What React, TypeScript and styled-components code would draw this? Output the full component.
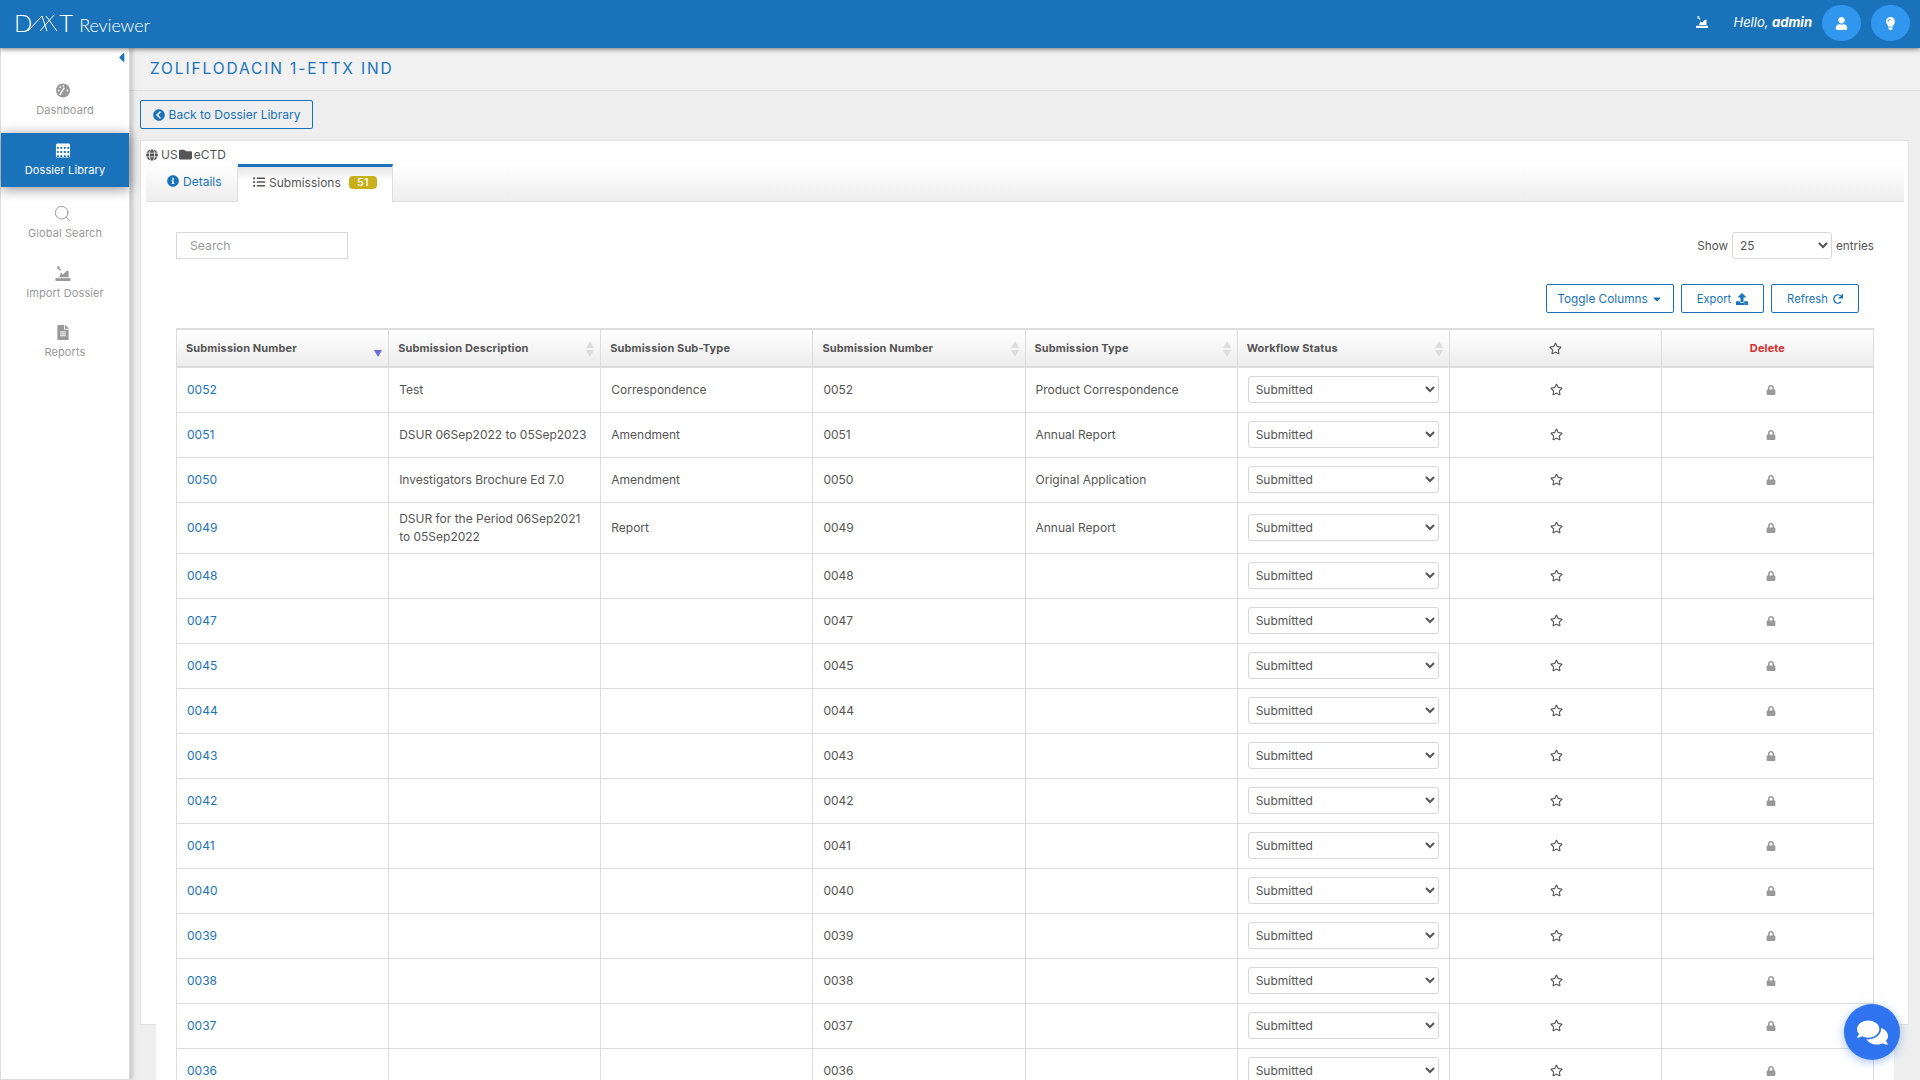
import { createGlobalStyle, styled } from "styled-components";
import {
  FaCaretDown,
  FaCaretLeft,
  FaChevronCircleLeft,
  FaComments,
  FaFileAlt,
  FaFolder,
  FaGlobe,
  FaInfoCircle,
  FaLightbulb,
  FaListUl,
  FaLock,
  FaRedo,
  FaRegStar,
  FaUpload,
  FaUser,
} from "react-icons/fa";
import { Search } from "lucide-react";

const blue = "#1a73ba";
const line = "#dcdcdc";

const GlobalStyle = createGlobalStyle`
  html, body {
    margin: 0;
    height: 100%;
    overflow: hidden;
    background: #eeeeee;
    font-family: Inter, "Liberation Sans", sans-serif;
    color: #555;
  }
  * { box-sizing: border-box; }
`;

const Shell = styled.div`
  height: 100vh;
  display: flex;
  flex-direction: column;
  overflow: hidden;
`;

const TopBar = styled.header`
  height: 48px;
  flex: none;
  background: ${blue};
  box-shadow: 0 1px 5px rgba(0, 0, 0, 0.55);
  display: flex;
  align-items: center;
  padding: 0 10px 2px 14px;
  color: #fff;
  position: relative;
  z-index: 3;
`;

const Logo = styled.div`
  display: flex;
  align-items: baseline;
  flex: 1;
  font-family: Lato, Inter, sans-serif;
  font-weight: 300;
`;

const LogoLetter = styled.span`
  font-size: 24px;
  line-height: 24px;
`;

const LogoMark = styled.svg`
  width: 33px;
  height: 18px;
  margin: 0 -1px 0 -5px;
  align-self: center;
`;

const LogoWord = styled.span`
  font-size: 18px;
  margin-left: 6px;
  letter-spacing: -0.1px;
`;

const TopIcon = styled.span`
  display: flex;
  margin-bottom: 3px;
`;

const Hello = styled.span`
  font-size: 13px;
  font-style: italic;
  margin: 0 0 2px 25px;
  b {
    font-weight: 700;
  }
`;

const RoundButton = styled.span`
  width: 39px;
  height: 36px;
  border-radius: 50%;
  background: #3196ee;
  display: flex;
  align-items: center;
  justify-content: center;
  margin-left: 10px;
  svg {
    width: 13px;
    height: 13px;
  }
`;

const Body = styled.div`
  flex: 1;
  display: flex;
  min-height: 0;
`;

const Sidebar = styled.nav`
  width: 130px;
  flex: none;
  background: #fff;
  border-left: 1px solid ${line};
  border-right: 1px solid ${line};
  border-bottom: 1px solid ${line};
  box-shadow: 3px 0 4px rgba(0, 0, 0, 0.16);
  position: relative;
  z-index: 2;
  padding-top: 26px;
  height: 1032px;
`;

const Collapse = styled.span`
  position: absolute;
  top: 2px;
  right: 0;
  color: ${blue};
  font-size: 15px;
`;

const NavItem = styled.div<{ $active?: boolean; $height: number; $top?: number; $bottom?: number }>`
  height: ${(p) => p.$height}px;
  padding: ${(p) => p.$top ?? 0}px 0 ${(p) => p.$bottom ?? 0}px;
  display: flex;
  flex-direction: column;
  align-items: center;
  justify-content: center;
  gap: 5px;
  font-size: 11px;
  color: ${(p) => (p.$active ? "#fff" : "#999")};
  background: ${(p) => (p.$active ? blue : "transparent")};
  box-shadow: ${(p) => (p.$active ? "0 2px 12px rgba(0,0,0,.45)" : "none")};
  letter-spacing: 0.1px;
  svg {
    width: 16px;
    height: 15px;
    margin-right: 5px;
  }
`;

const SearchGlyph = styled(Search)`
  && {
    width: 19px;
    height: 19px;
    margin: -2px 5px -2px 0;
  }
`;

const Main = styled.main`
  flex: 1;
  min-width: 0;
`;

const TitleBar = styled.div`
  height: 43px;
  border-bottom: 1px solid #e0e0e0;
  padding: 0 0 2px 20px;
  display: flex;
  align-items: center;
  background: #f1f1f1;
`;

const Title = styled.h1`
  margin: 0;
  font-size: 15.5px;
  font-weight: 400;
  letter-spacing: 1.88px;
  color: ${blue};
`;

const BackRow = styled.div`
  padding: 9px 0 11px 10px;
  display: flex;
`;

const OutlineButton = styled.button<{ $width: number; $small?: boolean }>`
  width: ${(p) => p.$width}px;
  height: 29px;
  background: #fff;
  border: 1px solid ${blue};
  border-radius: 2px;
  color: ${blue};
  font: 400 ${(p) => (p.$small ? "11.2px" : "11.8px")} Inter, sans-serif;
  display: inline-flex;
  align-items: center;
  justify-content: center;
  gap: 5px;
  padding: 0;
`;

const BackButton = styled(OutlineButton)`
  background: transparent;
  font-size: 12px;
  gap: 4px;
  svg {
    font-size: 12px;
  }
`;

const Card = styled.section`
  margin: 0 11px 0 10px;
  height: 885px;
  background: #fff;
  border: 1px solid #e2e2e2;
  padding: 4px 4px 0 5px;
`;

const Crumbs = styled.div`
  display: flex;
  align-items: center;
  height: 19px;
  font-size: 12px;
  color: #555;
  svg {
    font-size: 12px;
  }
  span {
    margin-left: 3px;
  }
`;

const FolderSpan = styled.span`
  display: inline-flex;
  margin: 0 2px 0 1px !important;
  svg {
    font-size: 13px;
  }
`;

const TabStrip = styled.div`
  height: 38px;
  display: flex;
  background: linear-gradient(#ffffff, #eeeeee);
  border-bottom: 1px solid #dedede;
`;

const Tab = styled.div<{ $active?: boolean }>`
  height: 38px;
  width: ${(p) => (p.$active ? "155px" : "92px")};
  display: flex;
  align-items: center;
  padding-left: ${(p) => (p.$active ? "15px" : "21px")};
  padding-bottom: ${(p) => (p.$active ? "5px" : "7px")};
  gap: 4px;
  font-size: 12px;
  color: ${(p) => (p.$active ? "#555" : blue)};
  border-right: 1px solid #dedede;
  border-top: ${(p) => (p.$active ? `3px solid ${blue}` : "3px solid transparent")};
  background: ${(p) => (p.$active ? "linear-gradient(#e6e6e6, #ffffff 40%)" : "transparent")};
  svg {
    font-size: 12px;
  }
`;

const Badge = styled.span`
  width: 28px;
  height: 13px;
  border-radius: 4px;
  background: #c8b01b;
  color: #fff;
  font-size: 11px;
  font-weight: 500;
  display: inline-flex;
  align-items: center;
  justify-content: center;
  margin-left: 4px;
`;

const Panel = styled.div`
  margin: 0 10px;
  padding: 30px 20px 0;
  background: #fff;
  height: 1000px;
`;

const Controls = styled.div`
  display: flex;
  justify-content: space-between;
  align-items: center;
`;

const SearchInput = styled.input`
  width: 172px;
  height: 27px;
  border: 1px solid #d8d8d8;
  padding: 0 13px;
  font: 400 12.2px Inter, sans-serif;
  color: #555;
  outline: none;
  &::placeholder {
    color: #999;
  }
`;

const ShowEntries = styled.label`
  display: flex;
  align-items: center;
  gap: 4px;
  font-size: 11.7px;
`;

const Select = styled.select<{ $width: number }>`
  width: ${(p) => p.$width}px;
  height: 27px;
  background: #fff;
  border: 1px solid #d8d8d8;
  border-radius: 3px;
  padding: 0 3px;
  color: #555;
  font: 400 12px Inter, sans-serif;
  outline: none;
  display: block;
`;

const ButtonRow = styled.div`
  display: flex;
  justify-content: flex-end;
  gap: 7px;
  margin-top: 25px;
  padding-right: 15px;
  margin-bottom: 15px;
`;

const Table = styled.table`
  width: 1698px;
  table-layout: fixed;
  border-collapse: collapse;
  border-top: 2px solid ${line};
  font-size: 12px;
`;

const Th = styled.th<{ $center?: boolean; $red?: boolean }>`
  height: 38px;
  padding: 0 0 0 9px;
  position: relative;
  text-align: ${(p) => (p.$center ? "center" : "left")};
  font-size: 11px;
  font-weight: 700;
  letter-spacing: 0.12px;
  color: ${(p) => (p.$red ? "#d32f2f" : "#555")};
  background: linear-gradient(#ffffff, #ececec);
  border-right: 1px solid ${line};
  border-bottom: 2px solid ${line};
  &:first-child {
    border-left: 1px solid ${line};
  }
  ${(p) => (p.$center ? "padding: 0;" : "")}
`;

const SortIcon = styled.svg`
  position: absolute;
  right: 6px;
  top: 11px;
  width: 8px;
  height: 16px;
`;

const Td = styled.td<{ $center?: boolean }>`
  height: 45px;
  padding: 7px 10px;
  border: 1px solid ${line};
  line-height: 18px;
  text-align: ${(p) => (p.$center ? "center" : "left")};
  vertical-align: middle;
`;

const StatusCell = styled(Td)`
  padding: 0 9px 0 10px;
`;

const IdLink = styled.a`
  color: ${blue};
  text-decoration: none;
`;

const StarIcon = styled(FaRegStar)`
  font-size: 13px;
  color: #555;
  display: inline-block;
  vertical-align: middle;
`;

const RowStar = styled(StarIcon)`
  margin: 0 0 2px 2px;
`;

const LockIcon = styled(FaLock)`
  font-size: 10px;
  color: #999;
  display: inline-block;
  vertical-align: middle;
  margin-left: 7px;
`;

const ChatButton = styled.button`
  position: fixed;
  left: 1844px;
  top: 1004px;
  width: 56px;
  height: 56px;
  border: 0;
  border-radius: 50%;
  background: #2f73ee;
  color: #fff;
  display: flex;
  align-items: center;
  justify-content: center;
  box-shadow: 0 2px 10px rgba(47, 115, 238, 0.45);
  z-index: 4;
  svg {
    font-size: 31px;
  }
`;

type Row = {
  id: string;
  description?: string;
  subType?: string;
  type?: string;
};

const rows: Row[] = [
  { id: "0052", description: "Test", subType: "Correspondence", type: "Product Correspondence" },
  { id: "0051", description: "DSUR 06Sep2022 to 05Sep2023", subType: "Amendment", type: "Annual Report" },
  { id: "0050", description: "Investigators Brochure Ed 7.0", subType: "Amendment", type: "Original Application" },
  { id: "0049", description: "DSUR for the Period 06Sep2021 to 05Sep2022", subType: "Report", type: "Annual Report" },
  { id: "0048" },
  { id: "0047" },
  { id: "0045" },
  { id: "0044" },
  { id: "0043" },
  { id: "0042" },
  { id: "0041" },
  { id: "0040" },
  { id: "0039" },
  { id: "0038" },
  { id: "0037" },
  { id: "0036" },
];

function ImportIcon({ color, size }: { color: string; size: number }) {
  return (
    <svg viewBox="0 0 16 16" width={size} height={size} fill={color}>
      <path d="M0 13h16v3H0z" />
      <path d="M4 12l2-5 2 2 4-4h2v7z" />
      <path d="M2 0l3 1-1 1 2 2-1 1-2-2-1 1z" />
    </svg>
  );
}

function GaugeIcon() {
  return (
    <svg viewBox="0 0 16 16">
      <circle cx="8" cy="8" r="7.5" fill="#999" />
      <path d="M4.6 12.6L9.4 5" stroke="#fff" strokeWidth="1.6" />
      <circle cx="3.4" cy="8" r="1" fill="#fff" />
      <circle cx="5" cy="4.4" r="1" fill="#fff" />
      <circle cx="8.4" cy="3" r="1" fill="#fff" />
      <circle cx="12.6" cy="8" r="1" fill="#fff" />
    </svg>
  );
}

function GridIcon() {
  const cells = [4.2, 8.6, 13];
  const cols = [1.5, 5.2, 8.9, 12.6];
  return (
    <svg viewBox="0 0 16 16">
      <rect x="0.5" y="0.5" width="15" height="15" rx="1.5" fill="#fff" />
      {cells.map((y) =>
        cols.map((x) => <rect key={`${x}-${y}`} x={x} y={y} width="2" height="2" fill={blue} />),
      )}
    </svg>
  );
}

function SortArrows({ sorted }: { sorted?: boolean }) {
  return (
    <SortIcon viewBox="0 0 8 16">
      {!sorted && <path d="M4 0l4 7H0z" fill="#dddddd" />}
      <path d="M0 9h8l-4 7z" fill={sorted ? "#6b6bdc" : "#dddddd"} />
    </SortIcon>
  );
}

export default function App() {
  return (
    <Shell>
      <GlobalStyle />
      <TopBar>
        <Logo>
          <LogoLetter>D</LogoLetter>
          <LogoMark viewBox="0 0 33 18" fill="none" stroke="#fff" strokeWidth="1">
            <path d="M1 17L15 2l5 15" />
            <path d="M13 17L27 1" />
            <path d="M19 2l11 15" />
          </LogoMark>
          <LogoLetter>T</LogoLetter>
          <LogoWord>Reviewer</LogoWord>
        </Logo>
        <TopIcon>
          <ImportIcon color="#fff" size={12} />
        </TopIcon>
        <Hello>
          Hello, <b>admin</b>
        </Hello>
        <RoundButton>
          <FaUser />
        </RoundButton>
        <RoundButton>
          <FaLightbulb />
        </RoundButton>
      </TopBar>
      <Body>
        <Sidebar>
          <Collapse>
            <FaCaretLeft />
          </Collapse>
          <NavItem $height={59} $bottom={7}>
            <GaugeIcon />
            Dashboard
          </NavItem>
          <NavItem $height={54} $active>
            <GridIcon />
            Dossier Library
          </NavItem>
          <NavItem $height={66} $top={6}>
            <SearchGlyph strokeWidth={1.2} />
            Global Search
          </NavItem>
          <NavItem $height={60}>
            <ImportIcon color="#999" size={15} />
            Import Dossier
          </NavItem>
          <NavItem $height={58}>
            <FaFileAlt />
            Reports
          </NavItem>
        </Sidebar>
        <Main>
          <TitleBar>
            <Title>ZOLIFLODACIN 1-ETTX IND</Title>
          </TitleBar>
          <BackRow>
            <BackButton $width={173}>
              <FaChevronCircleLeft />
              Back to Dossier Library
            </BackButton>
          </BackRow>
          <Card>
            <Crumbs>
              <FaGlobe />
              <span>US</span>
              <FolderSpan>
                <FaFolder />
              </FolderSpan>
              eCTD
            </Crumbs>
            <TabStrip>
              <Tab>
                <FaInfoCircle />
                Details
              </Tab>
              <Tab $active>
                <FaListUl />
                Submissions
                <Badge>51</Badge>
              </Tab>
            </TabStrip>
            <Panel>
              <Controls>
                <SearchInput placeholder="Search" />
                <ShowEntries>
                  Show
                  <Select $width={100} defaultValue="25">
                    <option>25</option>
                  </Select>
                  entries
                </ShowEntries>
              </Controls>
              <ButtonRow>
                <OutlineButton $width={128}>
                  Toggle Columns
                  <FaCaretDown size={12} style={{ marginLeft: -2 }} />
                </OutlineButton>
                <OutlineButton $width={83} $small>
                  Export
                  <FaUpload size={12} />
                </OutlineButton>
                <OutlineButton $width={88} $small>
                  Refresh
                  <FaRedo size={10} />
                </OutlineButton>
              </ButtonRow>
              <Table>
                <thead>
                  <tr>
                    <Th>
                      Submission Number
                      <SortArrows sorted />
                    </Th>
                    <Th>
                      Submission Description
                      <SortArrows />
                    </Th>
                    <Th>Submission Sub-Type</Th>
                    <Th>
                      Submission Number
                      <SortArrows />
                    </Th>
                    <Th>
                      Submission Type
                      <SortArrows />
                    </Th>
                    <Th>
                      Workflow Status
                      <SortArrows />
                    </Th>
                    <Th $center>
                      <StarIcon />
                    </Th>
                    <Th $center $red>
                      Delete
                    </Th>
                  </tr>
                </thead>
                <tbody>
                  {rows.map((row) => (
                    <tr key={row.id}>
                      <Td>
                        <IdLink href="#">{row.id}</IdLink>
                      </Td>
                      <Td>{row.description}</Td>
                      <Td>{row.subType}</Td>
                      <Td>{row.id}</Td>
                      <Td>{row.type}</Td>
                      <StatusCell>
                        <Select $width={191} defaultValue="Submitted">
                          <option>Submitted</option>
                        </Select>
                      </StatusCell>
                      <Td $center>
                        <RowStar />
                      </Td>
                      <Td $center>
                        <LockIcon />
                      </Td>
                    </tr>
                  ))}
                </tbody>
              </Table>
            </Panel>
          </Card>
        </Main>
      </Body>
      <ChatButton>
        <FaComments />
      </ChatButton>
    </Shell>
  );
}
